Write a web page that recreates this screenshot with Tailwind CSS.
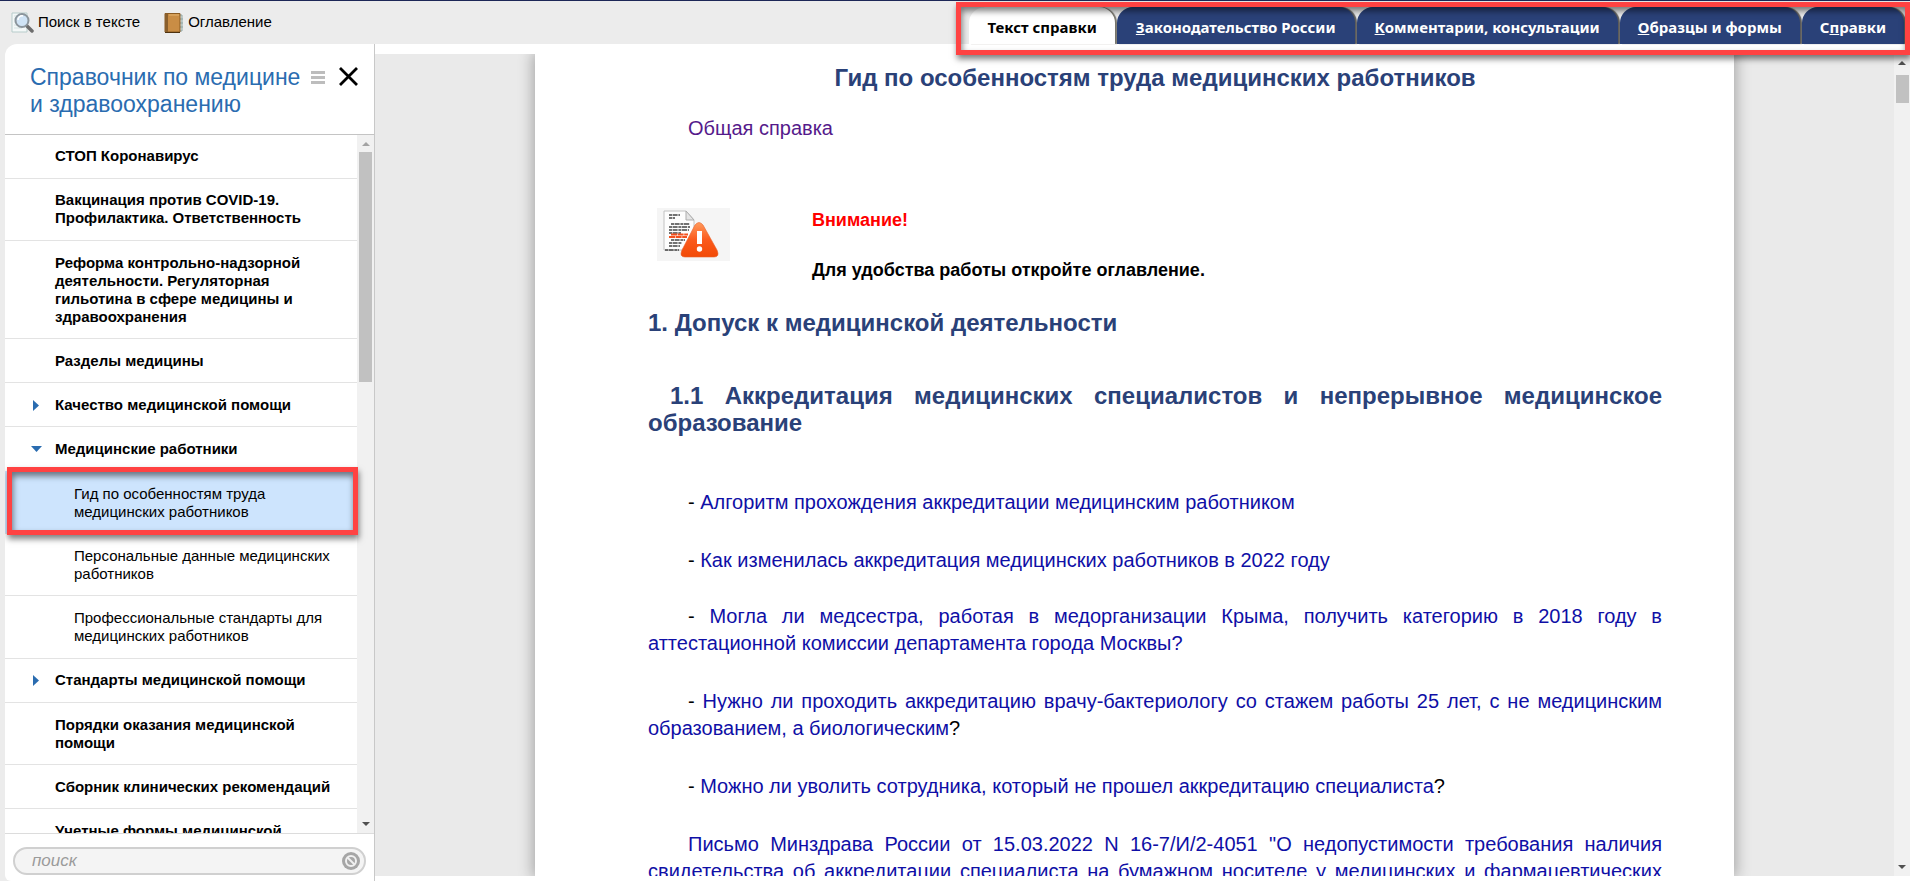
<!DOCTYPE html>
<html lang="ru">
<head>
<meta charset="utf-8">
<title>Справочник по медицине и здравоохранению</title>
<script src="https://cdn.jsdelivr.net/npm/@tailwindcss/browser@4"></script>
</head>
<body class="flex h-screen flex-col overflow-hidden bg-[#ececec] font-['Liberation_Sans',Arial,sans-serif] text-black">

<header class="relative flex h-11 shrink-0 items-end border-t border-[#1d2757]">
  <div class="flex h-full flex-1 items-center gap-6 pl-2.5">
    <button class="flex items-center gap-1 text-[15px]">
      <svg width="24" height="22" viewBox="0 0 24 22" aria-hidden="true">
        <path d="M2 1h15v19H2z" fill="#f4f8f8" stroke="#b7cccb"/>
        <path d="M4 4h3M4 7h2M4 10h2M4 13h3M4 16h8" stroke="#d3e2e2"/>
        <path d="M16.500 13.500 22 19" stroke="#6d6d6d" stroke-width="3.500" stroke-linecap="round"/>
        <circle cx="12" cy="8.500" r="6.500" fill="#cfe3f5" stroke="#8b959c" stroke-width="2"/>
        <path d="M8 8a4 4 0 0 1 5-4" fill="none" stroke="#fff" stroke-width="1.500"/>
      </svg>
      <span>Поиск в тексте</span>
    </button>
    <button class="flex items-center gap-1 text-[15px]">
      <svg width="20" height="22" viewBox="0 0 20 22" aria-hidden="true">
        <path d="M14 3h4v16h-4z" fill="#dfe6e4" stroke="#8fa5a3"/>
        <path d="M16 7h3M16 11h3M16 15h3" stroke="#8fa5a3"/>
        <path d="M1 1.500h15v18.500H1z" fill="#c98d45" stroke="#8a5a22"/>
        <path d="M1 1.500h3v18.500H1z" fill="#8a5f2c"/>
        <path d="M5 3h10" stroke="#e2b26f"/>
        <path d="M1 20.500h15" stroke="#4e3210"/>
      </svg>
      <span>Оглавление</span>
    </button>
  </div>
  <nav class="mr-1.5 flex h-[37px] gap-0.5 font-['Noto_Sans',sans-serif] text-[15px] font-bold text-white" aria-label="Разделы">
    <a href="#" class="flex items-center rounded-t-2xl bg-white px-[18px] pt-[3px] text-black shadow-[2px_0_1px_#77756c]">Текст справки</a>
    <a href="#" class="flex items-center rounded-t-2xl bg-[#2a4178] px-[19px] pt-[3px] shadow-[2px_0_1px_#5b5b5b]"><span><u>З</u>аконодательство России</span></a>
    <a href="#" class="flex items-center rounded-t-2xl bg-[#2a4178] px-[18px] pt-[3px] shadow-[2px_0_1px_#5b5b5b]"><span><u>К</u>омментарии, консультации</span></a>
    <a href="#" class="flex items-center rounded-t-2xl bg-[#2a4178] px-[18px] pt-[3px] shadow-[2px_0_1px_#5b5b5b]"><span><u>О</u>бразцы и формы</span></a>
    <a href="#" class="flex items-center rounded-t-2xl bg-[#2a4178] px-[18px] pt-[3px] shadow-[2px_0_1px_#5b5b5b]"><span>С<u>п</u>равки</span></a>
  </nav>
  <div class="pointer-events-none absolute top-px right-0 z-10 h-[53px] w-[954px] border-5 border-[#ff4242] shadow-[1px_4px_6px_rgba(0,0,0,0.5),inset_1px_4px_6px_rgba(0,0,0,0.5)]"></div>
</header>

<div class="flex min-h-0 flex-1">
  <aside class="ml-[5px] flex w-[370px] shrink-0 flex-col rounded-tl-xl rounded-bl-md border-r border-[#c8c8c8] bg-white">
    <div class="flex h-[91px] shrink-0 items-start border-b border-[#c4c4c4] pt-5 pr-4 pl-[25px]">
      <h1 class="flex-1 text-[23px] leading-[27px] whitespace-nowrap text-[#2a6cb0]">Справочник по медицине<br>и здравоохранению</h1>
      <button aria-label="Меню" class="mt-[7px] mr-3.5"><svg width="14" height="13" viewBox="0 0 14 13"><path d="M0 1.500h14M0 6.500h14M0 11.500h14" stroke="#bdbdbd" stroke-width="3"/></svg></button>
      <button aria-label="Закрыть" class="mt-[3px]"><svg width="19" height="19" viewBox="0 0 19 19"><path d="M1 1 18 18M18 1 1 18" stroke="#000" stroke-width="2.800"/></svg></button>
    </div>

    <div class="flex min-h-0 flex-1 overflow-hidden">
      <ul class="flex-1 text-[15px] leading-[18px] font-bold">
        <li class="border-b border-[#e3e3e3] pt-3 pb-[13px] pl-[50px]"><a href="#">СТОП Коронавирус</a></li>
        <li class="border-b border-[#e3e3e3] pt-3 pb-[13px] pl-[50px]"><a href="#">Вакцинация против COVID-19.<br>Профилактика. Ответственность</a></li>
        <li class="border-b border-[#e3e3e3] pt-[13px] pb-3 pl-[50px]"><a href="#">Реформа контрольно-надзорной<br>деятельности. Регуляторная<br>гильотина в сфере медицины и<br>здравоохранения</a></li>
        <li class="border-b border-[#e3e3e3] pt-[13px] pb-3 pl-[50px]"><a href="#">Разделы медицины</a></li>
        <li class="flex items-center border-b border-[#e3e3e3] pt-[13px] pb-3 pl-7"><svg class="mr-4" width="6" height="11" viewBox="0 0 6 11" aria-hidden="true"><path d="M0 0 6 5.500 0 11z" fill="#2a6cb0"/></svg><a href="#">Качество медицинской помощи</a></li>
        <li>
          <div class="flex items-center pt-[13px] pb-[13px] pl-[26px]"><svg class="mr-[13px]" width="11" height="6" viewBox="0 0 11 6" aria-hidden="true"><path d="M0 0h11L5.500 6z" fill="#2a6cb0"/></svg><a href="#">Медицинские работники</a></div>
          <ul class="font-normal">
            <li class="relative border-b border-[#e3e3e3] bg-[#cde4fd] pt-3.5 pb-3 pl-[69px]"><a href="#">Гид по особенностям труда<br>медицинских работников</a>
              <div class="pointer-events-none absolute -top-1 -right-px -bottom-0.5 left-0.5 border-5 border-[#ff4242] shadow-[1px_4px_6px_rgba(0,0,0,0.5),inset_1px_4px_6px_rgba(0,0,0,0.5)]"></div></li>
            <li class="border-b border-[#e3e3e3] pt-[13px] pb-3 pl-[69px]"><a href="#">Персональные данные медицинских<br>работников</a></li>
            <li class="border-b border-[#e3e3e3] pt-[13px] pb-[13px] pl-[69px]"><a href="#">Профессиональные стандарты для<br>медицинских работников</a></li>
          </ul>
        </li>
        <li class="flex items-center border-b border-[#e3e3e3] pt-3 pb-[13px] pl-7"><svg class="mr-4" width="6" height="11" viewBox="0 0 6 11" aria-hidden="true"><path d="M0 0 6 5.500 0 11z" fill="#2a6cb0"/></svg><a href="#">Стандарты медицинской помощи</a></li>
        <li class="border-b border-[#e3e3e3] pt-[13px] pb-3 pl-[50px]"><a href="#">Порядки оказания медицинской<br>помощи</a></li>
        <li class="border-b border-[#e3e3e3] pt-[13px] pb-3 pl-[50px]"><a href="#">Сборник клинических рекомендаций</a></li>
        <li class="border-b border-[#e3e3e3] pt-[13px] pb-3 pl-[50px]"><a href="#">Учетные формы медицинской<br>документации</a></li>
      </ul>
      <div class="flex w-[17px] flex-col items-center bg-[#f1f1f1] py-[7px]">
        <svg width="8" height="4" viewBox="0 0 8 4" aria-hidden="true"><path d="M0 4 4 0l4 4z" fill="#a3a3a3"/></svg>
        <div class="mt-1.5 h-[230px] w-[13px] bg-[#c1c1c1]"></div>
        <svg class="mt-auto" width="8" height="4" viewBox="0 0 8 4" aria-hidden="true"><path d="M0 0h8L4 4z" fill="#505050"/></svg>
      </div>
    </div>

    <div class="shrink-0 border-t border-[#dcdcdc] px-2 pt-[13px] pb-1.5">
      <div class="flex h-7 items-center rounded-full border-2 border-[#d0d0d0] bg-[#f4f4f4] pr-1 pl-[17px]">
        <input type="text" aria-label="поиск" placeholder="поиск" class="min-w-0 flex-1 bg-transparent text-[17px] italic outline-none placeholder:text-[#9b9b9b]">
        <button aria-label="Очистить"><svg width="18" height="18" viewBox="0 0 18 18"><circle cx="9" cy="9" r="9" fill="#a6a6a6"/><circle cx="9" cy="9" r="5" fill="none" stroke="#f0f0f0" stroke-width="2"/><path d="M5.500 5.500l7 7" stroke="#f0f0f0" stroke-width="2"/></svg></button>
      </div>
    </div>
  </aside>

  <main class="flex min-w-0 flex-1 flex-col bg-white pt-2.5 pb-[5px]">
    <div class="flex min-h-0 flex-1 overflow-hidden bg-[#eaeaea]">
      <div class="flex flex-1 justify-center">
        <article class="w-[1199px] bg-white pt-2.5 pr-[72px] pl-[113px] text-[20px] leading-[27px] shadow-[0_0_14px_2px_rgba(0,0,0,0.3)]">
          <h2 class="text-center text-[24px] font-bold text-[#2a4178]">Гид по особенностям труда медицинских работников</h2>
          <p class="mt-6 indent-10"><a href="#" class="text-[#551a8b]">Общая справка</a></p>
          <div class="mt-[66px] flex pl-[9px] text-[18px] font-bold">
            <svg class="mr-[82px] shrink-0" width="73" height="53" viewBox="0 0 73 53" role="img" aria-label="Внимание">
              <defs><linearGradient id="warn" x1="0" y1="0" x2="0" y2="1"><stop offset="0" stop-color="#ff9a5c"/><stop offset=".5" stop-color="#fb5a1c"/><stop offset="1" stop-color="#f24a06"/></linearGradient></defs>
              <path d="M0 0h73v53H0z" fill="#f5f5f5"/>
              <path d="M7 3h22l8 9v30H7z" fill="#fdfdfd" stroke="#c2c2c2"/>
              <path d="M29 3v9h8z" fill="#e4e4e4" stroke="#adadad"/>
              <path d="M12 7h11M12 10h6M14 16h19M12 19h21M12 22h20M12 25h12M14 32h14M12 35h13M12 38h11M8 42h14" stroke="#444" stroke-width="1.300" stroke-dasharray="3 .6 5 .8"/>
              <path d="M14 26.500h17M12 29h18" stroke="#f4511e" stroke-width="2" stroke-dasharray="6 .6"/>
              <path d="M38 17q4-5 8 0l14 25q3 7-3 7H28q-6 0-3-7z" fill="url(#warn)" stroke="#e8612c" stroke-width=".6"/>
              <path d="M40 23h5v13h-5z" fill="#fff"/><circle cx="42.500" cy="41" r="2.700" fill="#fff"/>
            </svg>
            <div class="-mt-px">
              <p class="text-[#ff0000]">Внимание!</p>
              <p class="mt-[23px] text-black">Для удобства работы откройте оглавление.</p>
            </div>
          </div>
          <h2 class="mt-[25px] text-[24px] font-bold text-[#2a4178]">1. Допуск к медицинской деятельности</h2>
          <h3 class="mt-[46px] indent-[22px] text-justify text-[24px] font-bold text-[#2a4178]">1.1 Аккредитация медицинских специалистов и непрерывное медицинское образование</h3>
          <div class="mt-[53px] flex flex-col gap-[31px] text-justify indent-10">
            <p>- <a href="#" class="text-[#0f0fa6]">Алгоритм прохождения аккредитации медицинским работником</a></p>
            <p>- <a href="#" class="text-[#0f0fa6]">Как изменилась аккредитация медицинских работников в 2022 году</a></p>
            <p class="-mt-0.5">- <a href="#" class="text-[#0f0fa6]">Могла ли медсестра, работая в медорганизации Крыма, получить категорию в 2018 году в аттестационной комиссии департамента города Москвы?</a></p>
            <p>- <a href="#" class="text-[#0f0fa6]">Нужно ли проходить аккредитацию врачу-бактериологу со стажем работы 25 лет, с не медицинским образованием, а биологическим</a>?</p>
            <p>- <a href="#" class="text-[#0f0fa6]">Можно ли уволить сотрудника, который не прошел аккредитацию специалиста</a>?</p>
            <p><a href="#" class="text-[#0f0fa6]">Письмо Минздрава России от 15.03.2022 N 16-7/И/2-4051 "О недопустимости требования наличия свидетельства об аккредитации специалиста на бумажном носителе у медицинских и фармацевтических работников"</a></p>
          </div>
        </article>
      </div>
      <div class="flex w-4 shrink-0 flex-col items-center bg-[#f1f1f1] pt-[7px] pb-[7px]">
        <svg width="8" height="4" viewBox="0 0 8 4" aria-hidden="true"><path d="M0 4 4 0l4 4z" fill="#505050"/></svg>
        <div class="mt-2.5 h-7 w-[13px] bg-[#c1c1c1]"></div>
        <svg class="mt-auto" width="8" height="4" viewBox="0 0 8 4" aria-hidden="true"><path d="M0 0h8L4 4z" fill="#505050"/></svg>
      </div>
    </div>
  </main>
</div>
</body>
</html>
